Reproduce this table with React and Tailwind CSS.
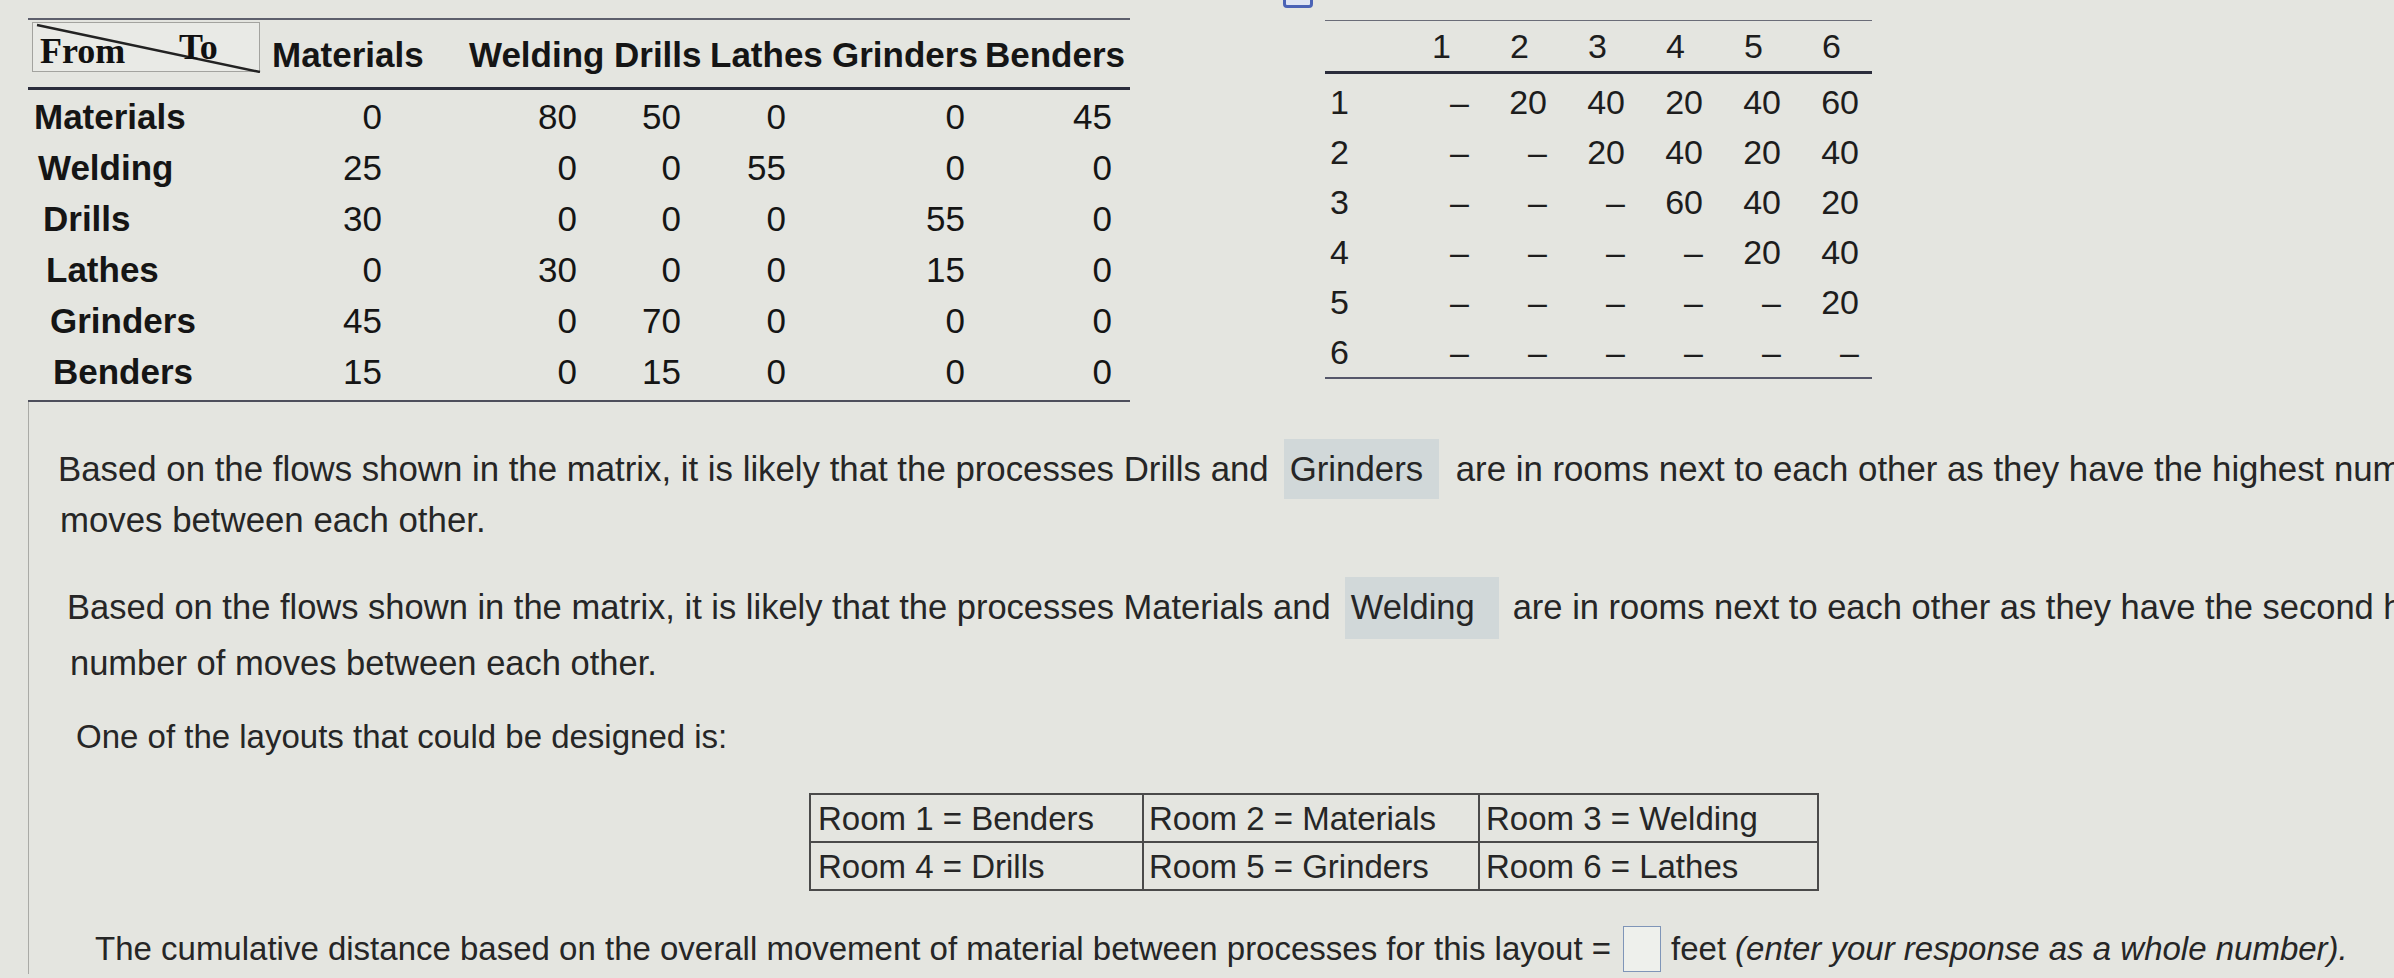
import React from "react";

const processes = ["Materials", "Welding", "Drills", "Lathes", "Grinders", "Benders"];

const flows = [
  [0, 80, 50, 0, 0, 45],
  [25, 0, 0, 55, 0, 0],
  [30, 0, 0, 0, 55, 0],
  [0, 30, 0, 0, 15, 0],
  [45, 0, 70, 0, 0, 0],
  [15, 0, 15, 0, 0, 0],
];

// column widths + paddings for the from-to matrix
const cols = [
  { w: "w-[193px]", head: "pl-[10px]", val: "pr-[73px]" },
  { w: "w-[156px]", head: "pl-[14px]", val: "pr-[34px]" },
  { w: "w-[95px]", head: "pl-[3px]", val: "pr-[25px]" },
  { w: "w-[123px]", head: "pl-[4px]", val: "pr-[43px]" },
  { w: "w-[152px]", head: "pl-[3px]", val: "pr-[16px]" },
  { w: "w-[149px]", head: "pl-[4px]", val: "pr-[18px]" },
];

const indents = ["pl-[6px]", "pl-[10px]", "pl-[15px]", "pl-[18px]", "pl-[22px]", "pl-[25px]"];

const D = "–";
const distances = [
  [D, 20, 40, 20, 40, 60],
  [D, D, 20, 40, 20, 40],
  [D, D, D, 60, 40, 20],
  [D, D, D, D, 20, 40],
  [D, D, D, D, D, 20],
  [D, D, D, D, D, D],
];

function FromTo() {
  return (
    <div className="relative mt-[2px] ml-[4px] h-[50px] w-[228px] border border-[#a3a39f] bg-[#e9eae6] font-['Liberation_Serif',serif] font-bold text-[36px] text-[#111]">
      <svg className="absolute inset-0" width="228" height="50" viewBox="0 0 228 50">
        <line x1="4" y1="2" x2="227" y2="49" stroke="#222" strokeWidth="2.5" />
      </svg>
      <span className="absolute left-[7px] bottom-[2px] leading-none">From</span>
      <span className="absolute left-[146px] top-[6px] leading-none">To</span>
    </div>
  );
}

function FlowMatrix() {
  return (
    <div className="ml-[28px] mt-[18px] w-[1102px] text-[#151515]">
      <div className="flex h-[69px] items-start border-t-2 border-[#5d5f6c]">
        <div className="w-[234px]">
          <FromTo />
        </div>
        {processes.map((p, i) => (
          <div key={p} className={`${cols[i].w} ${cols[i].head} self-center pt-[2px] text-[35px] font-bold leading-none`}>
            {p}
          </div>
        ))}
      </div>
      <div className="h-[3px] bg-[#2b2d3c]" />
      <div className="pt-[1px]">
        {processes.map((p, r) => (
          <div key={p} className="flex h-[51px] items-center text-[35px] leading-none">
            <div className={`w-[234px] font-bold ${indents[r]}`}>{p}</div>
            {flows[r].map((v, c) => (
              <div key={c} className={`${cols[c].w} ${cols[c].val} text-right`}>
                {v}
              </div>
            ))}
          </div>
        ))}
      </div>
      <div className="mt-[3px] h-[2px] bg-[#4d4f5c]" />
    </div>
  );
}

function DistanceMatrix() {
  return (
    <div className="relative ml-[195px] mt-[20px] w-[547px] text-[34px] leading-none text-[#1d1d1d]">
      {/* clipped toolbar icon */}
      <div className="absolute left-[-42px] top-[-38px] h-[26px] w-[30px] rounded-[4px] border-[3px] border-[#4b63b6] bg-[#dfe5f4]" />
      <div className="flex h-[51px] items-center border-t-[1.5px] border-[#6a6c78]">
        <div className="w-[70px]" />
        {[1, 2, 3, 4, 5, 6].map((n) => (
          <div key={n} className="w-[78px] pr-[22px] text-right">
            {n}
          </div>
        ))}
      </div>
      <div className="h-[3px] bg-[#2b2d3c]" />
      <div className="pt-[3px]">
        {distances.map((row, r) => (
          <div key={r} className="flex h-[50px] items-center">
            <div className="w-[70px] pl-[5px]">{r + 1}</div>
            {row.map((v, c) => (
              <div key={c} className="w-[78px] pr-[4px] text-right">
                {v}
              </div>
            ))}
          </div>
        ))}
      </div>
      <div className="h-[1.5px] bg-[#55576a]" />
    </div>
  );
}

function Answer({ children, w }) {
  return (
    <span className={`inline-flex h-full items-center bg-[#d1d8d9] pl-[6px] ${w}`}>{children}</span>
  );
}

export default function App() {
  return (
    <div className="relative h-[978px] w-[2394px] overflow-hidden bg-[#e4e5e0] font-['Liberation_Sans',Arial,sans-serif] text-[#262626]">
      {/* Matrices */}
      <div className="flex items-start">
        <FlowMatrix />
        <DistanceMatrix />
      </div>

      {/* Questions */}
      <div className="ml-[28px] border-l border-[#a9aaa6] pt-[37px] whitespace-nowrap">
        <div className="ml-[29px] flex h-[60px] items-center text-[34.8px]">
          <span>Based on the flows shown in the matrix, it is likely that the processes Drills and</span>
          <span className="ml-[15px] h-[60px]">
            <Answer w="w-[155px]">Grinders</Answer>
          </span>
          <span className="ml-[17px]">are in rooms next to each other as they have the highest number of</span>
        </div>
        <div className="ml-[31px] flex h-[42px] items-center text-[34.8px]">moves between each other.</div>

        <div className="ml-[38px] mt-[36px] flex h-[62px] items-center text-[34.5px]">
          <span>Based on the flows shown in the matrix, it is likely that the processes Materials and</span>
          <span className="ml-[14px] h-[62px]">
            <Answer w="w-[154px]">Welding</Answer>
          </span>
          <span className="ml-[14px]">are in rooms next to each other as they have the second highest</span>
        </div>
        <div className="ml-[41px] flex h-[50px] items-center text-[34.5px]">number of moves between each other.</div>

        <div className="ml-[47px] mt-[23px] flex h-[50px] items-center text-[33px]">One of the layouts that could be designed is:</div>

        <table className="ml-[780px] mt-[31px] border-collapse border-2 border-[#4a4a4a] text-[33px] leading-none">
          <tbody>
            <tr className="h-[48px]">
              <td className="w-[333px] border-2 border-[#4a4a4a] pl-[7px]">Room 1 = Benders</td>
              <td className="w-[336px] border-2 border-[#4a4a4a] pl-[5px]">Room 2 = Materials</td>
              <td className="w-[339px] border-2 border-[#4a4a4a] pl-[6px]">Room 3 = Welding</td>
            </tr>
            <tr className="h-[48px]">
              <td className="border-2 border-[#4a4a4a] pl-[7px]">Room 4 = Drills</td>
              <td className="border-2 border-[#4a4a4a] pl-[5px]">Room 5 = Grinders</td>
              <td className="border-2 border-[#4a4a4a] pl-[6px]">Room 6 = Lathes</td>
            </tr>
          </tbody>
        </table>

        <div className="ml-[66px] mt-[33px] flex h-[50px] items-center text-[33px]">
          <span>The cumulative distance based on the overall movement of material between processes for this layout =</span>
          <span className="ml-[12px] inline-block h-[46px] w-[38px] border border-[#7f95b8] bg-[#eef0ec]" />
          <span className="ml-[10px]">feet</span>
          <span className="ml-[9px] italic">(enter your response as a whole number).</span>
        </div>
      </div>
    </div>
  );
}
